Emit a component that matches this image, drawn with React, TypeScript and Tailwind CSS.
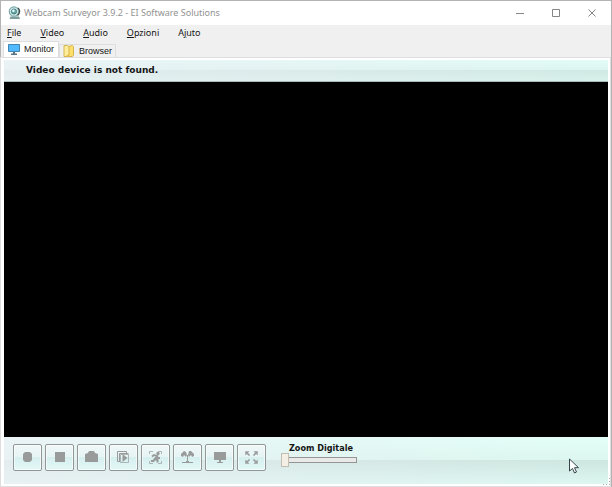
import { useState } from "react";
import type { ReactNode } from "react";
import { clsx } from "clsx";

interface Tool {
  label: string;
  icon: ReactNode;
}

const menus = [
  { before: "", key: "F", after: "ile" },
  { before: "", key: "V", after: "ideo" },
  { before: "", key: "A", after: "udio" },
  { before: "", key: "O", after: "pzioni" },
  { before: "A", key: "j", after: "uto" },
];

const tools: Tool[] = [
  { label: "Record", icon: <path d="M5 2h5l2 2v6l-2 2H5l-2-2V4z" fill="#999b9b" /> },
  { label: "Stop", icon: <path d="M3 2h10v10H3z" fill="#999b9b" /> },
  { label: "Snapshot", icon: <path d="M1 4l3-1 1-2h5l1 2 3 1v8H1z" fill="#999b9b" /> },
  {
    label: "Sequence",
    icon: (
      <g fill="none" stroke="#999b9b">
        <path d="M3.500 11.500h-2v-10h9v2M3.500 12V3.500h9" />
        <path d="M4.500 4.500h8v8h-8z" strokeOpacity="0.700" />
        <path d="M6.500 4l5 4-5 4z" fill="#999b9b" stroke="none" />
      </g>
    ),
  },
  {
    label: "Motion detection",
    icon: (
      <g fill="none" stroke="#999b9b">
        <path d="M1.500 4V1.500H5M10 1.500h3.500V4M13.500 11v2.500H10M5 13.500H1.500V11" strokeOpacity="0.700" />
        <circle cx="10" cy="3.500" r="1.700" fill="#999b9b" stroke="none" />
        <path d="M4 6.500l2-1.500 3 1-2 3 2.500 1v2.500M7 8.500l-1.500 2.500H3M9 6.500l1 1.500h2" strokeWidth="2" />
      </g>
    ),
  },
  {
    label: "Broadcast",
    icon: (
      <g fill="#999b9b">
        <path d="M4 1l2 1 1 3-1 2-2-2-1 2-2-1V4zM8 5l1-4h2l3 3v2l-2 1-1-2-2 2z" />
        <path d="M7 5h1v8H7zM2 12h11v1H2z" />
        <path d="M6 11h3v2H6z" />
      </g>
    ),
  },
  { label: "Virtual monitor", icon: <path d="M2 2h12v8H9v2h2v1H5v-1h2v-2H2z" fill="#999b9b" /> },
  {
    label: "Full screen",
    icon: (
      <g fill="#999b9b" stroke="#999b9b">
        <path d="M1.500 1.500H5l-3.500 3.500zM13.500 1.500V5L10 1.500zM1.500 13.500V10L5 13.500zM13.500 13.500H10l3.500-3.500z" strokeWidth="0.500" />
        <path d="M3 3l2.500 2.500M12 3L9.500 5.500M3 12l2.500-2.500M12 12L9.500 9.500" strokeWidth="1.700" />
      </g>
    ),
  },
];

function WebcamLogo() {
  return (
    <svg width="14" height="14" viewBox="0 0 14 14" aria-hidden="true">
      <path d="M2.500 10.500L1.500 13H12l-1-2.500z" fill="#7d9c9d" />
      <circle cx="6" cy="5.500" r="4.700" fill="#d5eeed" stroke="#7fa9aa" strokeWidth="1.200" />
      <circle cx="6" cy="5.500" r="2.600" fill="#69a9aa" stroke="#376f73" strokeWidth="0.800" />
      <circle cx="5.400" cy="4.700" r="1.200" fill="#e9ffff" />
      <path d="M10 2c2 2 2 5-.5 7.500" fill="none" stroke="#3e4f50" strokeWidth="1.200" />
    </svg>
  );
}

function MonitorIcon() {
  return (
    <svg className="shrink-0" width="12" height="12" viewBox="0 0 12 12" aria-hidden="true">
      <path d="M.5.500h11v7H.5z" fill="#50b9ff" stroke="#4184ae" />
      <path d="M5 8h2v1.500h2V11H3V9.500h2z" fill="#577484" />
    </svg>
  );
}

function BrowserIcon() {
  return (
    <svg className="shrink-0" width="12" height="13" viewBox="0 0 12 13" aria-hidden="true">
      <path d="M5 1.500L9.500.500l1 1V10l-1 1.500H5z" fill="#ffdf6c" stroke="#d4b64e" />
      <path d="M1 .5h3.500L6 2v8l-2 1.500H1z" fill="#ffec9c" stroke="#d4b64e" />
      <path d="M3 11l3-2v3.500z" fill="#e4bd47" />
    </svg>
  );
}

const windowButtons = [
  { label: "Minimize", d: "M0 5.500h8" },
  { label: "Maximize", d: "M.5 1.500h7v7h-7z" },
  { label: "Close", d: "M.5 1.500l7 7M7.500 1.500l-7 7" },
];

export default function App() {
  const [tab, setTab] = useState("Monitor");
  const [zoom, setZoom] = useState(0);

  return (
    <div className="relative flex min-h-screen flex-col border border-[#b3b3b3] bg-[#f0f0f0] font-['Noto_Sans','Liberation_Sans',sans-serif] text-[9px] text-[#151515]">
      <header className="flex h-6 items-center bg-white pr-px pl-[7px]">
        <WebcamLogo />
        <h1 className="ml-0.5 flex-1 text-[9px] text-[#929292]">Webcam Surveyor 3.9.2 - EI Software Solutions</h1>
        {windowButtons.map((b) => (
          <button key={b.label} aria-label={b.label} className="flex h-6 w-9 items-center justify-center">
            <svg width="8" height="10" viewBox="0 0 8 10" fill="none" stroke="#858585">
              <path d={b.d} />
            </svg>
          </button>
        ))}
      </header>

      <nav className="flex h-4 items-center gap-[19px] pl-1.5">
        {menus.map((m) => (
          <button key={m.key} className="leading-4">
            {m.before}
            <span className="underline">{m.key}</span>
            {m.after}
          </button>
        ))}
      </nav>

      <div role="tablist" className="flex items-end pl-0.5">
        {["Monitor", "Browser"].map((name) => (
          <button
            key={name}
            role="tab"
            aria-selected={tab === name}
            onClick={() => setTab(name)}
            className={clsx(
              "flex items-center gap-1 border border-b-0 border-[#dedede] font-['Liberation_Sans',sans-serif]",
              tab === name ? "h-[17px] bg-white px-1" : "h-3.5 bg-[#f0f0f0] px-[3px]",
            )}
          >
            {name === "Monitor" ? <MonitorIcon /> : <BrowserIcon />}
            {name}
          </button>
        ))}
      </div>

      <main className="mr-px flex flex-1 flex-col border-2 border-l-[3px] border-white outline outline-[#dedede]">
        <div className="flex h-[22px] items-center border-b border-[#a9bcbc] bg-[linear-gradient(to_right,#eeeef4aa,transparent),linear-gradient(#e2fcf7_0%,#dcf5f0_48%,#d0e9e4_50%,#d8f1eb_100%)] pl-[22px]">
          <p className="font-['DejaVu_Sans',sans-serif] text-[9px] font-bold">Video device is not found.</p>
        </div>
        <div className="flex-1 bg-black" />
        <footer className="flex h-[47px] items-start bg-[linear-gradient(to_right,#eeeef4aa,transparent),linear-gradient(#e2fff8_0%,#dcf7f0_48%,#cde6e0_50%,#dcf7f1_100%)] pt-[7px] pl-[9px]">
          <div className="flex gap-[3px]">
            {tools.map((t) => (
              <button
                key={t.label}
                aria-label={t.label}
                className="flex h-[27px] w-[29px] items-center justify-center rounded-xs border border-[#919797] bg-[linear-gradient(#f0f7f7_0%,#e6f4f4_48%,#d6efef_50%,#e3f8f7_100%)] inset-ring inset-ring-white/60"
              >
                <svg width="15" height="15" viewBox="0 0 15 15" aria-hidden="true">
                  {t.icon}
                </svg>
              </button>
            ))}
          </div>
          <div className="ml-[15px] flex flex-col">
            <label htmlFor="zoom" className="pl-2 font-['DejaVu_Sans_Condensed','DejaVu_Sans',sans-serif] text-[9px] leading-[9px] font-bold">
              Zoom Digitale
            </label>
            <input
              id="zoom"
              type="range"
              min={0}
              max={100}
              value={zoom}
              onChange={(e) => setZoom(Number(e.target.value))}
              className="h-3.5 w-[76px] appearance-none bg-transparent [&::-webkit-slider-runnable-track]:h-1.5 [&::-webkit-slider-runnable-track]:border [&::-webkit-slider-runnable-track]:border-[#959595] [&::-webkit-slider-runnable-track]:bg-[#e9e9e9] [&::-webkit-slider-thumb]:-mt-[5px] [&::-webkit-slider-thumb]:-ml-px [&::-webkit-slider-thumb]:h-3.5 [&::-webkit-slider-thumb]:w-2 [&::-webkit-slider-thumb]:appearance-none [&::-webkit-slider-thumb]:border [&::-webkit-slider-thumb]:border-[#c3beb0] [&::-webkit-slider-thumb]:bg-[#f3efe5]"
            />
          </div>
        </footer>
      </main>

      <svg className="absolute right-0 bottom-0" width="9" height="9" viewBox="0 0 9 9" fill="#aaa" aria-hidden="true">
        <path d="M7 1h1v1H7zM7 4h1v1H7zM4 7h1v1H4zM1 7h1v1H1zM7 7h1v1H7z" />
      </svg>
      <svg className="absolute right-8 bottom-3" width="10" height="16" viewBox="0 0 10 16" aria-hidden="true">
        <path d="M.5 1v12l3-2.500 2 4.500 2-1-2-4.300h4z" fill="#fff" stroke="#34434a" />
      </svg>
    </div>
  );
}
